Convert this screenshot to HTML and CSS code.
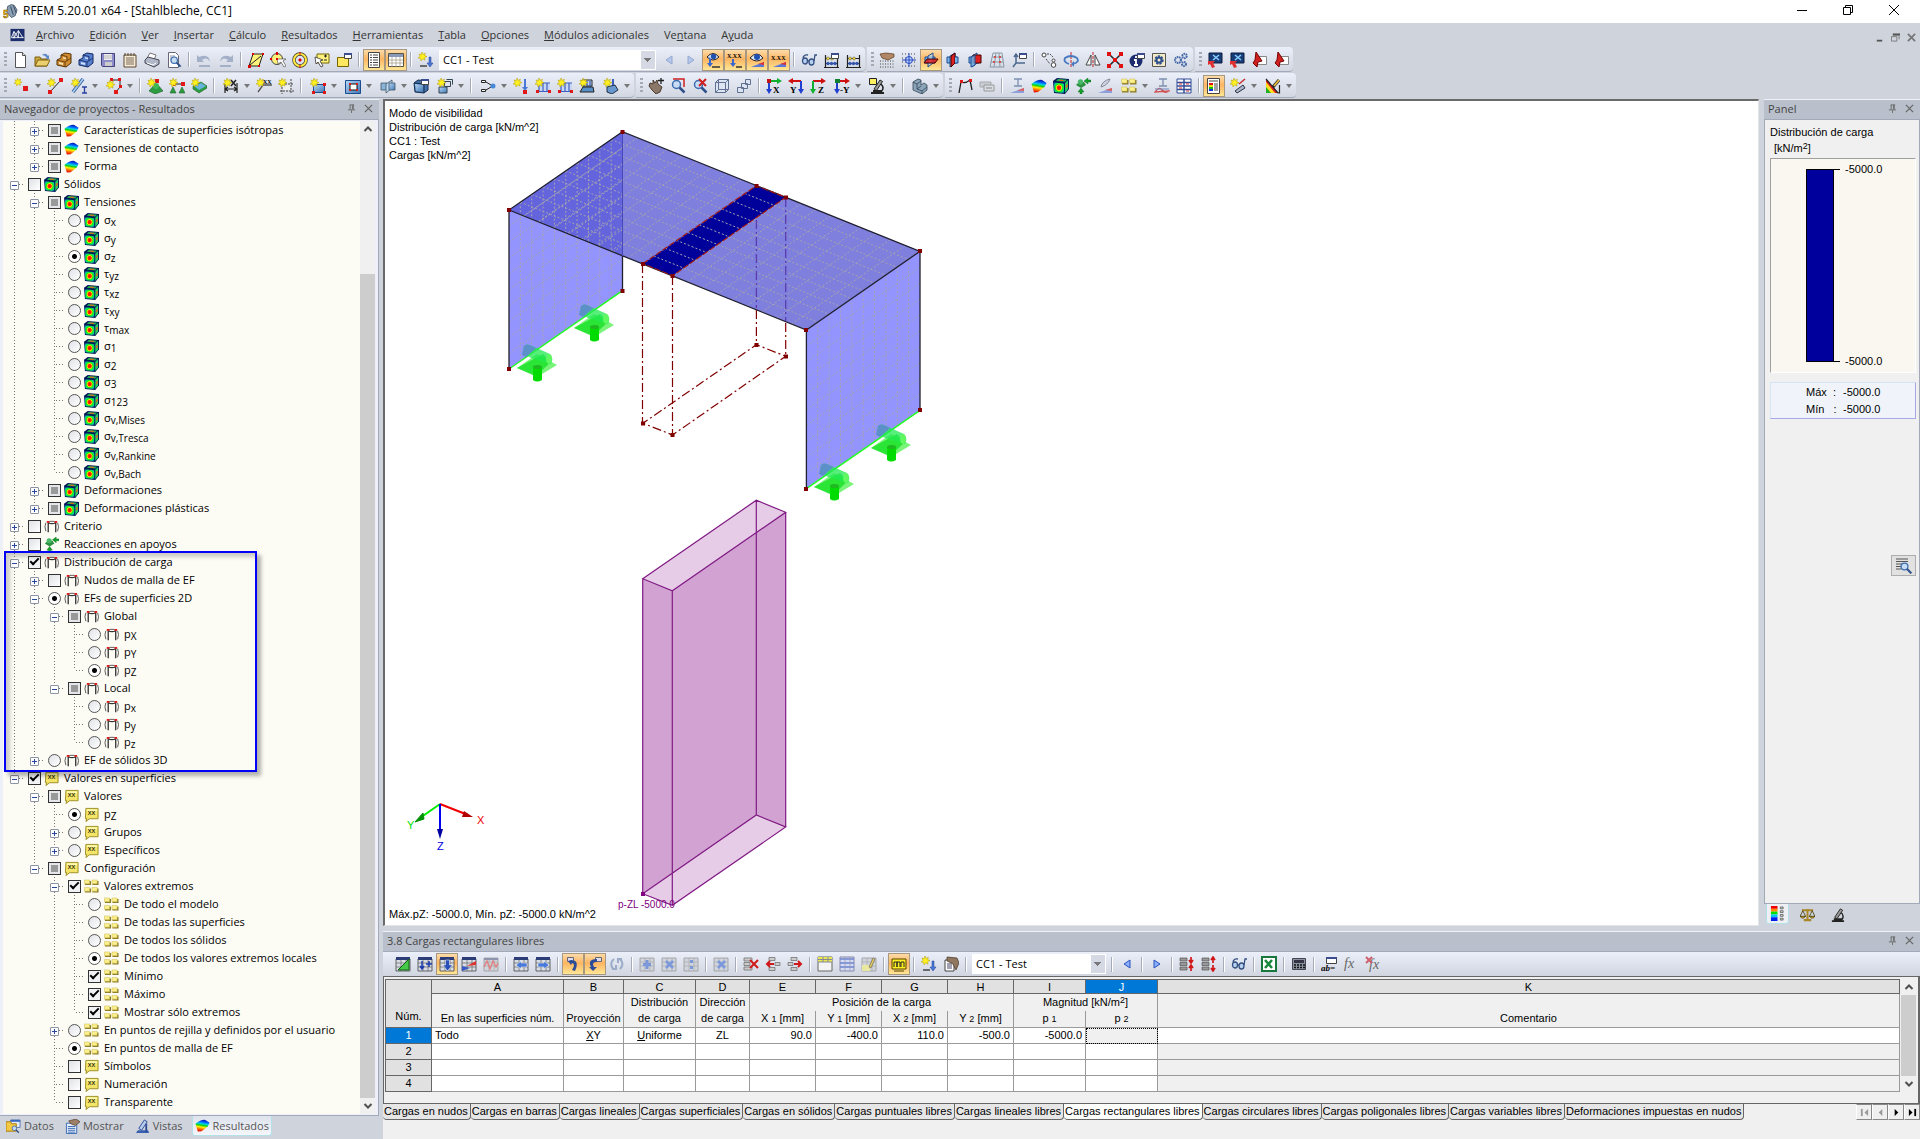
FILE: index.html
```html
<!DOCTYPE html>
<html lang="es">
<head>
<meta charset="utf-8">
<title>RFEM 5.20.01 x64 - [Stahlbleche, CC1]</title>
<link rel="stylesheet" href="styles.css">
</head>
<body>
<svg class="paints" aria-hidden="true">
<defs>
<linearGradient id="rb" x1=".6" y1="0" x2=".4" y2="1"><stop offset="0" stop-color="#0010a0"/><stop offset=".2" stop-color="#0060ff"/><stop offset=".35" stop-color="#00d8e0"/><stop offset=".48" stop-color="#10d010"/><stop offset=".63" stop-color="#fff000"/><stop offset=".8" stop-color="#ff7000"/><stop offset="1" stop-color="#e00000"/></linearGradient>
<radialGradient id="rr" r=".62"><stop offset="0" stop-color="#f00000"/><stop offset=".3" stop-color="#ff3000"/><stop offset=".42" stop-color="#ffe000"/><stop offset=".55" stop-color="#20f010"/><stop offset=".85" stop-color="#00d890"/><stop offset="1" stop-color="#0060a0"/></radialGradient>
<linearGradient id="bl" x1="0" y1="0" x2="1" y2="1"><stop offset="0" stop-color="#b8d8f4"/><stop offset="1" stop-color="#3f78b4"/></linearGradient>
</defs>
</svg>
<svg class="sprite" aria-hidden="true">
<defs>
<g id="star"><path d="M4 0l1 2.400L7.400 1.200 6.600 3.600 9 4.600 6.600 5.600 7 8.200 4.800 6.800 3 9 2.600 6.400 0 6 2.200 4.400 1 2 3.300 2.600z" fill="#fff020" stroke="#b09a00" stroke-width=".5"/></g>
<g id="arrd"><path d="M11 5h2v6h2l-3 4-3-4h2z" fill="#4a78d8" stroke="#1c3c90" stroke-width=".5"/></g>
<g id="win"><path d="M8.500 1.500h7v5h-7z" fill="#fff" stroke="#444"/><path d="M8 1h8v2H8z" fill="#3c4c90"/></g>
<g id="plane"><path d="M2 5h10v6H2z" fill="#7ab4e8" stroke="#1c4c90"/><path d="M5 4l5-3v10l-5 4z" fill="#b8d8f4" fill-opacity=".7" stroke="#1c4c90"/></g>
<g id="abac"><path d="M2.500 3v12M14.500 3v12M1 15.500h15" stroke="#222" stroke-width="1.200"/><path d="M2 6.500h12M2 11.500h12" stroke="#222"/><circle cx="5" cy="6.500" r="1.500" fill="#f0d840" stroke="#333" stroke-width=".4"/><circle cx="9" cy="6.500" r="1.500" fill="#f0d840" stroke="#333" stroke-width=".4"/><circle cx="5" cy="11.500" r="1.700" fill="#3458b0"/><circle cx="8.500" cy="11.500" r="1.700" fill="#3458b0"/><circle cx="12" cy="11.500" r="1.700" fill="#3458b0"/></g>
<g id="grid"><path d="M1 3h14v12H1z" fill="#d8dce4" stroke="#444" stroke-width=".8"/><path d="M1 7h14M1 11h14M6 3v12M11 3v12" stroke="#666" stroke-width=".7"/><path d="M1 1h14v3H1z" fill="#2c3c78"/></g>
<g id="ggrid"><path d="M1 2h14v13H1z" fill="#d0d4dc" stroke="#999" stroke-width=".8"/><path d="M1 6h14M1 10h14M6 2v13M11 2v13" stroke="#aaa" stroke-width=".7"/></g>
<g id="glass"><circle cx="6.500" cy="6.500" r="4" fill="#c8ddf4" stroke="#3c6cb0" stroke-width="1.500"/><path d="M9.500 9.500l5 5" stroke="#30508c" stroke-width="2.500"/></g>
<g id="micro"><path d="M2 15h13M4 13h9" stroke="#222" stroke-width="2"/><path d="M5 11l6-9 2.500 1.500-6 9z" fill="#999" stroke="#222"/><path d="M12 6q4 4 0 8" fill="none" stroke="#222" stroke-width="1.500"/></g>
</defs>
<symbol id="app" viewBox="0 0 16 16"><path d="M5 3l4-2 3 1 3 5-2 6-4 2-5-6z" fill="#8ca0b4" stroke="#34465c" stroke-width=".8"/><path d="M8 3l3 9M11 2l3 8" stroke="#34465c"/><text x="0" y="15" class="t-five">5</text></symbol>
<symbol id="mdi" viewBox="0 0 16 16"><path d="M0 1h16v14H0z" fill="#1c2f6c"/><path d="M1 11h14M4 12V4l-3 7M4 4l5 7V3L4 11M9 3l5 8" stroke="#fff" fill="none"/></symbol>
<symbol id="new" viewBox="0 0 16 16"><path d="M3.500.5h7l3 3v12h-10z" fill="#fff" stroke="#555"/><path d="M10.500.5v3h3" fill="#ddd" stroke="#555"/></symbol>
<symbol id="open" viewBox="0 0 16 16"><path d="M1 14V5h5l1 2h6v7z" fill="#caa63c" stroke="#7c6010"/><path d="M1 14l3-6h12l-3 6z" fill="#ecd070" stroke="#7c6010"/><path d="M8 3q4-3 6 1l1-1v4h-3l1-1q-2-3-5-3z" fill="#5c88c8"/></symbol>
<symbol id="cabo" viewBox="0 0 16 16"><path d="M1 8l4-2V3l4-2 6 1v9l-5 4-9-2z" fill="#d08c30" stroke="#553408"/><path d="M1 8l8 2 6-4M9 10v5M5 3l6 1.500V9" fill="none" stroke="#553408" stroke-width=".8"/><path d="M3 10l4 1v2l-4-1zM7 5l3 .7v1.500L7 6.500z" fill="#f8e0b0"/></symbol>
<symbol id="cabb" viewBox="0 0 16 16"><path d="M1 8l4-2V3l4-2 6 1v9l-5 4-9-2z" fill="#5880d0" stroke="#142860"/><path d="M1 8l8 2 6-4M9 10v5M5 3l6 1.500V9" fill="none" stroke="#142860" stroke-width=".8"/><path d="M3 10l4 1v2l-4-1zM7 5l3 .7v1.500L7 6.500z" fill="#d0e0fc"/></symbol>
<symbol id="save" viewBox="0 0 16 16"><path d="M1.500 1.500h13v13h-12l-1-1z" fill="#8c8cc8" stroke="#44447c"/><path d="M4 2h8v6H4z" fill="#eee"/><path d="M5 10h7v4H5z" fill="#ccc"/><path d="M4 4h8M4 6h8" stroke="#999" stroke-width=".6"/></symbol>
<symbol id="note" viewBox="0 0 16 16"><path d="M2 3h12v12H2z" fill="#f4ecd8" stroke="#5c4830"/><path d="M4 6h8M4 8h8M4 10h8M4 12h8" stroke="#7c6850"/><path d="M3 1v3M6 1v3M9 1v3M12 1v3" stroke="#5c4830"/></symbol>
<symbol id="print" viewBox="0 0 16 16"><path d="M3 6L6 1l6 2-2 5z" fill="#fff" stroke="#777"/><path d="M1 8l3-3 11 3v4l-5 3-9-4z" fill="#b0b8c8" stroke="#445"/><path d="M3 11l6 2 3-2" stroke="#fff" fill="none"/></symbol>
<symbol id="preview" viewBox="0 0 16 16"><path d="M2.500.5h7l3 3v12h-10z" fill="#fff" stroke="#667"/><path d="M4 4h5M4 6h6M4 8h4" stroke="#89a"/><g transform="translate(3 3) scale(.8)"><use href="#glass"/></g></symbol>
<symbol id="undo" viewBox="0 0 16 16"><path d="M1 3v7h7L6 8q5-4 8 2-1-9-11-5z" fill="#a4b0c8"/><path d="M3 14h11" stroke="#a4b0c8" stroke-width="2"/></symbol>
<symbol id="redo" viewBox="0 0 16 16"><path d="M15 3v7H8l2-2Q5 4 2 10q1-9 11-5z" fill="#a4b0c8"/><path d="M2 14h11" stroke="#a4b0c8" stroke-width="2"/></symbol>
<symbol id="spar" viewBox="0 0 16 16"><path d="M1 14L5 2h10l-4 12z" fill="#fff27c" stroke="#222"/><path d="M2 13L13 4" stroke="#222"/><path d="M0 13h3v3H0zM4 1h2v2H4zM14 1h2v2h-2zM10 13h2v2h-2z" fill="#d00"/></symbol>
<symbol id="scir" viewBox="0 0 16 16"><circle cx="7" cy="7" r="5.500" fill="#fff27c" stroke="#444"/><path d="M7 7h9l-3 2 3 5-2 1-3-5-3 2z" fill="#fff" stroke="#555" stroke-width=".7"/><path d="M6 0h2v3H6zM0 6h2v2H0zM6 6h2v2H6z" fill="#d00"/></symbol>
<symbol id="targ" viewBox="0 0 16 16"><circle cx="8" cy="8" r="6" fill="none" stroke="#333" stroke-width="3.500"/><circle cx="8" cy="8" r="6" fill="none" stroke="#ffe840" stroke-width="2.200"/><path d="M7 7h2v2H7zM8 0v3M8 13v3" fill="#d00" stroke="#d00"/></symbol>
<symbol id="scur" viewBox="0 0 16 16"><path d="M3 2h12v9H3z" fill="#fff27c" stroke="#776600"/><path d="M1 5l8 3-3 1 3 5-2 1-3-5-2 2z" fill="#fff" stroke="#333" stroke-width=".8"/><path d="M10 4h3M11.500 2.500v3M10 8h3" stroke="#222"/></symbol>
<symbol id="swin" viewBox="0 0 16 16"><path d="M1.500 5.500h11v9h-11z" fill="#ffe860" stroke="#776600"/><use href="#win"/></symbol>
<symbol id="list" viewBox="0 0 16 16"><path d="M2.500.5h11v15h-11z" fill="#fff" stroke="#444"/><path d="M4 3h2M4 5.500h2M4 8h2M4 10.500h2M4 13h2M7 3h5M7 5.500h5M7 8h5M7 10.500h5M7 13h5" stroke="#444"/></symbol>
<symbol id="table" viewBox="0 0 16 16"><path d="M.5 1.500h15v13H.5z" fill="#fff" stroke="#554"/><path d="M1 2h14v3H1z" fill="#8c98b8"/><path d="M1 8h14M1 11h14M4 5v10M8 5v10M12 5v10" stroke="#a8a090" stroke-width=".8"/></symbol>
<symbol id="load" viewBox="0 0 16 16"><use href="#star"/><use href="#arrd"/><path d="M2 14h7" stroke="#444" stroke-width="1.500"/></symbol>
<symbol id="prevl" viewBox="0 0 16 16"><path d="M11 4v8L5 8z" fill="#b4c8ec" stroke="#94a8d0"/></symbol>
<symbol id="nextl" viewBox="0 0 16 16"><path d="M5 4v8l6-4z" fill="#b4c8ec" stroke="#94a8d0"/></symbol>
<symbol id="prev" viewBox="0 0 16 16"><path d="M11 4v8L5 8z" fill="#88b0f8" stroke="#2850c0"/></symbol>
<symbol id="next" viewBox="0 0 16 16"><path d="M5 4v8l6-4z" fill="#88b0f8" stroke="#2850c0"/></symbol>
<symbol id="eyea" viewBox="0 0 16 16"><path d="M2 5q6-7 12 0-6 6-12 0z" fill="#dce8f8" stroke="#222"/><circle cx="8.500" cy="4.500" r="2.700" fill="#2050b0"/><path d="M4 5v6H2l3 4 3-4H6V7z" fill="#3868d0"/><path d="M7 15h8" stroke="#333" stroke-width="1.500"/></symbol>
<symbol id="xxa" viewBox="0 0 16 16"><text x="0" y="6" class="t-xx">X.XX</text><path d="M5 7v4H3l3 4 3-4H7V7z" fill="#3868d0"/><path d="M9 15h6" stroke="#333" stroke-width="1.500"/></symbol>
<symbol id="eyet" viewBox="0 0 16 16"><path d="M1 6q7-8 13 0-6 6-13 0z" fill="#dce8f8" stroke="#222"/><circle cx="8" cy="5" r="3" fill="#2050b0"/><path d="M2 15h13v-5z" fill="#5a78d8"/><path d="M9 12l6-2v3z" fill="#e03030"/></symbol>
<symbol id="xxt" viewBox="0 0 16 16"><text x="0" y="8" class="t-xx">X.XX</text><path d="M2 15h13v-5z" fill="#5a78d8"/><path d="M9 12l6-2v3z" fill="#e03030"/></symbol>
<symbol id="specs" viewBox="0 0 16 16"><ellipse cx="4" cy="9" rx="2.500" ry="3" fill="#b8d0f0" stroke="#345080" stroke-width="1.300"/><ellipse cx="10.500" cy="10" rx="2.500" ry="3" fill="#b8d0f0" stroke="#345080" stroke-width="1.300"/><path d="M2 6q1-4 5-3M13 9l1-6h2M7 9h1" fill="none" stroke="#345080" stroke-width="1.300"/></symbol>
<symbol id="abw" viewBox="0 0 16 16"><use href="#abac"/><use href="#win"/></symbol>
<symbol id="ab" viewBox="0 0 16 16"><use href="#abac"/></symbol>
<symbol id="hgrid" viewBox="0 0 16 16"><path d="M1 9h14M1 12h14M1 15h14" stroke="#444" stroke-dasharray="1 1.500"/><path d="M1 2l6-1 8 1v3L9 8 3 6z" fill="#b08868" stroke="#5c3818" stroke-width=".7"/></symbol>
<symbol id="gsnap" viewBox="0 0 16 16"><path d="M1 2h14M1 6h14M1 10h14M1 14h14" stroke="#444" stroke-dasharray="1 2"/><circle cx="8" cy="8" r="3.500" fill="#bcd4fc" stroke="#2848c0"/><path d="M8 1v14M1 8h14" stroke="#2848c0"/></symbol>
<symbol id="wp1" viewBox="0 0 16 16"><use href="#plane"/><path d="M1 11l3-4h11l-3 4z" fill="#e02020" fill-opacity=".85" stroke="#400"/></symbol>
<symbol id="wp2" viewBox="0 0 16 16"><use href="#plane"/><path d="M6 4l4-3v10l-4 4z" fill="#e02020" stroke="#400"/><path d="M10 5h3v6h-3" fill="#7ab4e8" stroke="#1c4c90"/></symbol>
<symbol id="wp3" viewBox="0 0 16 16"><use href="#plane"/><path d="M6 3h8v8H6z" fill="#e02020" stroke="#400"/><path d="M4 5l4-2v10l-4 2z" fill="#7ab4e8" fill-opacity=".8" stroke="#1c4c90"/></symbol>
<symbol id="gdot" viewBox="0 0 16 16"><path d="M4 1h9l2 14H1zM3 5h11M2 10h12M7 1L5 15M10 1l1 14" fill="none" stroke="#8898a8"/><path d="M5 4h2v2H5zM10 4h2v2h-2zM4 9h2v2H4zM10 9h2v2h-2z" fill="#d05050"/></symbol>
<symbol id="axw" viewBox="0 0 16 16"><path d="M5 2v9l-3 4M5 11h9M3 5l2-3 2 3" fill="none" stroke="#4c6890" stroke-width="1.500"/><use href="#win"/></symbol>
<symbol id="copy" viewBox="0 0 16 16"><circle cx="3" cy="3" r="2" fill="#fff" stroke="#444"/><circle cx="12.500" cy="13" r="2.300" fill="#fff" stroke="#444"/><circle cx="12.500" cy="8.500" r="1.500" fill="#fff" stroke="#444"/><path d="M5 7l4 5M6 2h3l3 3" fill="none" stroke="#444" stroke-dasharray="2 1"/></symbol>
<symbol id="rot" viewBox="0 0 16 16"><path d="M8 0v16" stroke="#c02020" stroke-dasharray="3 1"/><path d="M6 12q-6-2-4-6 6-4 12 0 3 4-4 6" fill="none" stroke="#4878c0" stroke-width="1.800"/><path d="M11 9v6l-3-3z" fill="#4878c0"/></symbol>
<symbol id="mir" viewBox="0 0 16 16"><path d="M8 0v16" stroke="#c02020" stroke-dasharray="3 1"/><path d="M6 3v10H1zM10 3v10h5z" fill="#fff" stroke="#444"/></symbol>
<symbol id="xnode" viewBox="0 0 16 16"><path d="M2 2l12 12M14 2L2 14" stroke="#222" stroke-width="1.500"/><path d="M0 0h4v4H0zM12 0h4v4h-4zM0 12h4v4H0zM12 12h4v4h-4zM6 6h4v4H6z" fill="#e01010"/></symbol>
<symbol id="info" viewBox="0 0 16 16"><circle cx="7" cy="9" r="6.500" fill="#1c2c6c"/><path d="M7 4v2M5 8h2v5M5 13h4" stroke="#fff" stroke-width="1.800" fill="none"/><use href="#win"/></symbol>
<symbol id="gdoc" viewBox="0 0 16 16"><path d="M1.500 1.500h13v13h-13z" fill="#f4ecc8" stroke="#555"/><circle cx="8" cy="8" r="3.500" fill="none" stroke="#30508c" stroke-width="2.500" stroke-dasharray="2 1"/><circle cx="8" cy="8" r="2.500" fill="none" stroke="#30508c" stroke-width="2"/></symbol>
<symbol id="gears" viewBox="0 0 16 16"><g fill="none" stroke="#4468a8" stroke-width="2"><circle cx="5" cy="8" r="3" stroke-dasharray="1.500 .6"/><circle cx="11.500" cy="4" r="2.200" stroke-dasharray="1.500 .6"/><circle cx="11" cy="12" r="2" stroke-dasharray="1.500 .6"/></g></symbol>
<symbol id="scr" viewBox="0 0 16 16"><path d="M2 1h13v10H2z" fill="#183c78" stroke="#0c1c40"/><path d="M6 3l6 5M12 3L6 8" stroke="#8cd0ff" stroke-width="1.500"/><path d="M1 9h7l-2 2 2 4-3 1-2-4-2 1z" fill="#e03030"/></symbol>
<symbol id="pdf" viewBox="0 0 16 16"><path d="M6.500 4.500h9v8h-9z" fill="#fff" stroke="#888"/><path d="M5 0l6 9-4 1-1 5-4-4 2-3z" fill="#d02020" stroke="#700"/></symbol>
<symbol id="node" viewBox="0 0 16 16"><g transform="scale(.9)"><use href="#star"/></g><path d="M9 8h5v5H9z" fill="#e01818"/></symbol>
<symbol id="line" viewBox="0 0 16 16"><path d="M3 14L14 2" stroke="#222"/><path d="M1 12h4v4H1zM12 0h4v4h-4z" fill="#e01818"/><use href="#star"/></symbol>
<symbol id="memb" viewBox="0 0 16 16"><path d="M2 14L12 1" stroke="#2c5c9c" stroke-width="3.500"/><path d="M2 14L12 1" stroke="#a8c8ec" stroke-width="2"/><use href="#star"/><path d="M11 9h5M11 15h5M13.500 9v6" stroke="#2840a0" stroke-width="1.300"/></symbol>
<symbol id="poly" viewBox="0 0 16 16"><path d="M5 2h9v7l-4 5" fill="none" stroke="#222"/><path d="M4 0h3v3H4zM12 0h3v3h-3zM13 7h3v3h-3zM8 12h4v4H8z" fill="#e01818"/><g transform="translate(0 2)"><use href="#star"/></g></symbol>
<symbol id="supp" viewBox="0 0 16 16"><path d="M8 6l3 1 5 6-8 3-6-3z" fill="#2c9c40" stroke="#0c5018" stroke-width=".5"/><circle cx="9" cy="8" r="3" fill="#40b858"/><path d="M8 1h4v4H8z" fill="#e01818"/><use href="#star"/></symbol>
<symbol id="supl" viewBox="0 0 16 16"><path d="M5 6h8" stroke="#222"/><path d="M3 4h4v4H3zM12 4h4v4h-4z" fill="#e01818"/><path d="M4 9l3 6H1zM13 9l3 6h-6z" fill="#2c9c40" stroke="#0c5018" stroke-width=".5"/><use href="#star"/></symbol>
<symbol id="supf" viewBox="0 0 16 16"><path d="M2 8l8-4 6 4v2l-8 5-6-4z" fill="#2c9c40" stroke="#0c5018" stroke-width=".5"/><path d="M3 8l7-3 5 3-7 4z" fill="#68b4e0"/><use href="#star"/></symbol>
<symbol id="dim" viewBox="0 0 16 16"><path d="M2 5v10M14 5v10M2 11h12M5 9l-3 2 3 2M11 9l3 2-3 2" fill="none" stroke="#222" stroke-width="1.200"/><use href="#star"/><path d="M8 2l5 6M13 2L8 8" stroke="#222" stroke-width="1.500"/></symbol>
<symbol id="dxx" viewBox="0 0 16 16"><path d="M2 14l5-7h9" fill="none" stroke="#555" stroke-width="1.300"/><use href="#star"/><text x="7" y="6" class="t-xx">XX</text></symbol>
<symbol id="sect" viewBox="0 0 16 16"><path d="M4 3v13M13 1v14M1 6h15M2 13h14" stroke="#444" stroke-dasharray="2 1"/><path d="M5 7h7v5H5z" fill="#eee"/><use href="#star"/></symbol>
<symbol id="surf" viewBox="0 0 16 16"><path d="M3.500 6.500h11v8h-11z" fill="url(#bl)" stroke="#1c4c90"/><path d="M2 13h3v3H2zM13 13h3v3h-3zM13 5h3v3h-3z" fill="#e01818"/><use href="#star"/></symbol>
<symbol id="opng" viewBox="0 0 16 16"><path d="M.5 2.500h15v13H.5z" fill="url(#bl)" stroke="#1c4c90"/><path d="M5 6h7v6H5z" fill="#fff" stroke="#111"/><path d="M4 5h2v2H4zM11 5h2v2h-2zM4 11h2v2H4zM11 11h2v2h-2z" fill="#e01818"/></symbol>
<symbol id="fold" viewBox="0 0 16 16"><path d="M1 5h6v7H1z" fill="#8ab4d8" stroke="#456" stroke-width=".8"/><path d="M6 6l6-4v8l-6 5z" fill="#b8d8f4" stroke="#456" stroke-width=".8"/><path d="M9 5h6v7l-6 0z" fill="url(#bl)" stroke="#456" stroke-width=".8"/></symbol>
<symbol id="sold" viewBox="0 0 16 16"><path d="M1 5l4-3 10 1v9l-4 3-9-1z" fill="#4470a8" stroke="#142c50"/><path d="M1 5l10 1v9M11 6l4-3" fill="none" stroke="#142c50"/><path d="M2 6l8 1v7l-7-1z" fill="url(#bl)"/><use href="#win"/></symbol>
<symbol id="boxs" viewBox="0 0 16 16"><path d="M2 9h8v6H2z" fill="url(#bl)" stroke="#345"/><path d="M7.500 3.500h6v5h-6zM9.500 1.500h6v5" fill="none" stroke="#345"/><use href="#star"/></symbol>
<symbol id="dist" viewBox="0 0 16 16"><path d="M1.500 2.500h4v2h-4zM1.500 11.500h4v2h-4z" fill="#fff" stroke="#222"/><path d="M6 4l5 3M6 12l5-3" fill="none" stroke="#222"/><circle cx="13" cy="8" r="2.500" fill="#4888d8"/></symbol>
<symbol id="nload" viewBox="0 0 16 16"><use href="#star"/><path d="M11 1h2v8h2l-3 4-3-4h2z" fill="#4a78d8"/><path d="M10 12h4v4h-4z" fill="#e01818"/></symbol>
<symbol id="mload" viewBox="0 0 16 16"><path d="M3 5h12v8H3z" fill="#c8d8f4"/><path d="M4 5v8M8 5v8M12 5v8M3 5h12M2 13.500h13" stroke="#3c60c0" stroke-width="1.200"/><path d="M1 12h3v3H1zM13 12h3v3h-3z" fill="#e01818"/><use href="#star"/></symbol>
<symbol id="fload" viewBox="0 0 16 16"><path d="M3 2h10v6H3z" fill="#c8d8f4" stroke="#222"/><path d="M5 3v8M8 3v8M11 3v8" stroke="#3c60c0" stroke-width="1.300"/><path d="M1 14l3-5h10l1 5z" fill="#5890c8" stroke="#222"/><use href="#star"/></symbol>
<symbol id="sload" viewBox="0 0 16 16"><path d="M9 1h2v7H9z" fill="#3c60c0"/><path d="M4 9l8-2 3 5-6 4-5-2z" fill="#6898d0" stroke="#234"/><use href="#star"/></symbol>
<symbol id="pan" viewBox="0 0 16 16"><path d="M2 5l3 1 0-4 2 3 2-3 1 4 4 3-2 5-4 2-4-4-3-4z" fill="#8c7868" stroke="#332418" stroke-width=".8"/><path d="M10 2.500h6M13 0v6" stroke="#222" stroke-width="1.300"/></symbol>
<symbol id="zoomw" viewBox="0 0 16 16"><path d="M3 1h11v8" fill="none" stroke="#d02020" stroke-width="1.500"/><use href="#glass"/></symbol>
<symbol id="zoomx" viewBox="0 0 16 16"><use href="#glass"/><path d="M7 1l7 7M14 1L7 8" stroke="#d02020" stroke-width="2"/></symbol>
<symbol id="wire" viewBox="0 0 16 16"><path d="M1.500 4.500l3-3h10v10l-3 3h-10zM1.500 4.500h10v10M11.500 4.500l3-3M4.500 1.500v10h10M4.500 11.500l-3 3" fill="#dce4f4" stroke="#607090"/></symbol>
<symbol id="exps" viewBox="0 0 16 16"><path d="M1.500 9.500h6v5h-6zM5.500 5.500h6v5h-6zM9.500 1.500h5v5h-5z" fill="#dce4f4" stroke="#607090"/></symbol>
<symbol id="vx" viewBox="0 0 16 16"><path d="M3 3h9" stroke="#10b030" stroke-width="2"/><path d="M11 0l5 3-5 3z" fill="#10b030"/><path d="M3 3v9" stroke="#2040d0" stroke-width="2"/><path d="M0 11h6l-3 5z" fill="#2040d0"/><path d="M1 1h4v4H1z" fill="#c01010"/><text x="7" y="15" class="t-ax">X</text></symbol>
<symbol id="vy" viewBox="0 0 16 16"><path d="M4 3h9" stroke="#d01010" stroke-width="2"/><path d="M5 0L0 3l5 3z" fill="#d01010"/><path d="M13 3v9" stroke="#2040d0" stroke-width="2"/><path d="M10 11h6l-3 5z" fill="#2040d0"/><text x="2" y="15" class="t-ax">Y</text></symbol>
<symbol id="vz" viewBox="0 0 16 16"><path d="M3 3h9" stroke="#d01010" stroke-width="2"/><path d="M11 0l5 3-5 3z" fill="#d01010"/><path d="M3 3v9" stroke="#10b030" stroke-width="2"/><path d="M0 11h6l-3 5z" fill="#10b030"/><text x="8" y="15" class="t-ax">Z</text></symbol>
<symbol id="vmy" viewBox="0 0 16 16"><path d="M3 3h9" stroke="#d01010" stroke-width="2"/><path d="M11 0l5 3-5 3z" fill="#d01010"/><path d="M3 3v9" stroke="#2040d0" stroke-width="2"/><path d="M0 11h6l-3 5z" fill="#2040d0"/><path d="M1 1h5v4H1z" fill="#108030"/><text x="6" y="15" class="t-ax">-Y</text></symbol>
<symbol id="vis" viewBox="0 0 16 16"><use href="#micro"/><path d="M.5.5h7v6h-7z" fill="#fff060" stroke="#222"/></symbol>
<symbol id="lblk" viewBox="0 0 16 16"><path d="M1 4l5-3 3 1v5l3-2 3 2v5l-5 4-9-4z" fill="#8ca4b8" stroke="#345" stroke-width=".8"/><path d="M1 4l4 2v5l5 2v3M5 6l4-3M10 13l5-4M5 11l4-3" fill="none" stroke="#345" stroke-width=".8"/></symbol>
<symbol id="frm" viewBox="0 0 16 16"><path d="M2 15L4 4q4 2 9-2l2 10" fill="none" stroke="#222" stroke-width="1.300"/><path d="M3 2h3v3H3zM12 1h3v3h-3z" fill="#e01818"/></symbol>
<symbol id="gray" viewBox="0 0 16 16"><path d="M1 4h11v5H1z" fill="#c8ccd4" stroke="#aaa"/><path d="M5 7h10v6H5z" fill="#d8dce4" stroke="#999"/><path d="M7 10h6" stroke="#888"/></symbol>
<symbol id="itri" viewBox="0 0 16 16"><path d="M5 1h8M5 8h8M9 1v7" stroke="#7c90b0" stroke-width="1.300"/><path d="M1 15h14v-5z" fill="#8ca0dc"/><path d="M8 12.500l7-2.500v3z" fill="#e06060"/></symbol>
<symbol id="fan" viewBox="0 0 16 16"><path d="M.5 6Q7 1 11 2l4.500 3-2 4L7 14l-4 .5z" fill="url(#rb)"/></symbol>
<symbol id="cube" viewBox="0 0 16 16"><path d="M0 3l4-3 12 1v10l-4 5-11-1z" fill="#001858"/><path d="M1 4.500l10 1V15L1.500 14z" fill="url(#rr)"/><path d="M12 5l3-3v9l-3 4z" fill="#20d060"/><path d="M3 3l2-2 9 .8-2 2z" fill="#20b850"/><path d="M13 7l1.500-1v3L13 10.500zM7 1.700l4 .5-1 .9-4-.4z" fill="#f06010"/></symbol>
<symbol id="react" viewBox="0 0 16 16"><path d="M1 7l3-3 5 0 2 3-5 3z" fill="#2c9040"/><circle cx="5.500" cy="4" r="2.700" fill="#48b868"/><path d="M16 2h-3V0l-4 3 4 3V4h3zM7 16v-2h2l-3-4-3 4h2v2z" fill="#10a028" stroke="#0c6018" stroke-width=".4"/></symbol>
<symbol id="rtri" viewBox="0 0 16 16"><path d="M1 15h14v-5z" fill="#8ca0dc"/><path d="M8 12l7-2v3z" fill="#e06060"/><path d="M4 9q1-6 9-8-2 6-9 8z" fill="#ccd4e4" stroke="#889"/></symbol>
<symbol id="four" viewBox="0 0 16 16"><g fill="#8c7c28"><path d="M1 2h6.500v4.500H1zM9 2h6.500v4.500H9zM1 10h6.500v4.500H1zM9 10h6.500v4.500H9z"/></g><g fill="#fbf08c" stroke="#c8b850" stroke-width=".5"><path d="M.5 1H6v4H.5zM8.500 1H14v4H8.500zM.5 9H6v4H.5zM8.500 9H14v4H8.500z"/></g></symbol>
<symbol id="icur" viewBox="0 0 16 16"><path d="M5 1h8M5 8h8M9 1v7" stroke="#7c90b0" stroke-width="1.300"/><path d="M1 14q4-6 7-2t7 1z" fill="none" stroke="#d05050" stroke-width="1.300"/><path d="M1 11h14" stroke="#7088c0"/></symbol>
<symbol id="resg" viewBox="0 0 16 16"><path d="M1 1h14v14H1z" fill="#fff" stroke="#334c98"/><path d="M1 4.500h14M1 8h14M1 11.500h14M8 1v14" stroke="#334c98" stroke-width="1.500"/><path d="M3 6h3M10 6h3M3 10h3M10 13h3" stroke="#d03030"/></symbol>
<symbol id="pnl" viewBox="0 0 16 16"><path d="M1.500.5h12v15h-12z" fill="#fff" stroke="#444"/><path d="M3 3h9" stroke="#444"/><path d="M3 5h4v2H3z" fill="#e01010"/><path d="M3 7h4v2H3z" fill="#f0e010"/><path d="M3 9h4v2H3z" fill="#10c010"/><path d="M3 11h4v2H3z" fill="#1030e0"/><path d="M8 6h4M8 8h4M8 10h4M8 12h4" stroke="#444"/></symbol>
<symbol id="wand" viewBox="0 0 16 16"><path d="M5 13l8-6 2 3-8 5z" fill="#a8b4c8" stroke="#334"/><path d="M9 6l6-5" stroke="#c83030" stroke-width="1.500"/><use href="#star"/></symbol>
<symbol id="flag" viewBox="0 0 16 16"><path d="M1 1v14h12z" fill="#e02020"/><path d="M1 4v11h9z" fill="#ffe020"/><path d="M1 9v6h5z" fill="#20b020"/><path d="M1 1l12 14M14.500 7v8H13" fill="none" stroke="#222" stroke-width="1.200"/><path d="M14 2L8 9" stroke="#222" stroke-width="3"/><path d="M14 2L9 8" stroke="#f0c040" stroke-width="1.800"/></symbol>
<symbol id="arch" viewBox="0 0 16 16"><path d="M4.500 14V4q4 2 8 0V14" fill="none" stroke="#333" stroke-width="1.400"/><path d="M3 3h3M11 3h3" stroke="#e01818" stroke-width="2"/><path d="M6 2.500h5" stroke="#555"/><path d="M2 4Q0 8 2 13M14.500 4q2 4 0 9" fill="none" stroke="#555"/></symbol>
<symbol id="xx" viewBox="0 0 16 16"><path d="M2 1.500h13v11H6l-4 3 1-3H1.500z" fill="#f4e468" stroke="#9c8c20"/><path d="M3 2.500h11v2H3z" fill="#fffab0"/><text x="4" y="9" class="t-note">xx</text></symbol>
<symbol id="t1" viewBox="0 0 16 16"><use href="#grid"/><path d="M3 14h11V3z" fill="#48c848" stroke="#106010"/></symbol>
<symbol id="t2" viewBox="0 0 16 16"><use href="#grid"/><path d="M5 5v8M3 10l2 3 2-3M9 8h6M12 5v6" fill="none" stroke="#1c3cb0" stroke-width="1.500"/></symbol>
<symbol id="t3" viewBox="0 0 16 16"><use href="#grid"/><path d="M6.500 4h4v5h3L8.500 15 4 9h2.500z" fill="#2850b8" stroke="#fff" stroke-width=".5"/></symbol>
<symbol id="t4" viewBox="0 0 16 16"><use href="#grid"/><path d="M6 10l9-5v4z" fill="#e03030"/><path d="M1 10l8 2-8 3z" fill="#3858c8"/></symbol>
<symbol id="t5" viewBox="0 0 16 16"><use href="#ggrid"/><path d="M1 2h14v2H1z" fill="#8c94b0"/><path d="M1 11l3-6 3 8 3-8 3 6 2-4" fill="none" stroke="#e08080" stroke-width="1.400"/></symbol>
<symbol id="tl" viewBox="0 0 16 16"><use href="#grid"/><path d="M3 9l5-4v2h6v4H8v2z" fill="#4878d8" stroke="#fff" stroke-width=".5"/></symbol>
<symbol id="tr" viewBox="0 0 16 16"><use href="#grid"/><path d="M14 9L9 5v2H3v4h6v2z" fill="#4878d8" stroke="#fff" stroke-width=".5"/></symbol>
<symbol id="c1" viewBox="0 0 16 16"><path d="M2.500 1.500h6v4h-6z" fill="#dde" stroke="#667"/><path d="M6 4q9 0 4 11l-3-1q4-6 0-7l-1 2-3-4z" fill="#2c4c98"/></symbol>
<symbol id="c2" viewBox="0 0 16 16"><path d="M8.500 1.500h6v4h-6z" fill="#dde" stroke="#667"/><path d="M10 3Q0 3 4 11H2l4 4 4-4H7q-3-5 3-5z" fill="#2c4c98"/></symbol>
<symbol id="c3" viewBox="0 0 16 16"><path d="M4 13Q0 7 5 3M11 3q5 5 0 10M3 13h4V9M13 3H9v4" fill="none" stroke="#9cacc8" stroke-width="2"/></symbol>
<symbol id="gp" viewBox="0 0 16 16"><use href="#ggrid"/><path d="M8 4v9M4 8.500h8" stroke="#7c98dc" stroke-width="3"/></symbol>
<symbol id="gx" viewBox="0 0 16 16"><use href="#ggrid"/><path d="M5 5l7 7M12 5l-7 7" stroke="#7c98dc" stroke-width="2.500"/></symbol>
<symbol id="gd" viewBox="0 0 16 16"><use href="#ggrid"/><path d="M7 4h3v3H7zM7 10h3v3H7z" fill="#7c98dc"/></symbol>
<symbol id="rx" viewBox="0 0 16 16"><path d="M1 2h8v3H1zM1 6.500h6v3H1zM1 11h8v3H1z" fill="#ccc" stroke="#666" stroke-width=".7"/><path d="M7 4l8 8M15 4l-8 8" stroke="#d01818" stroke-width="2"/></symbol>
<symbol id="rl" viewBox="0 0 16 16"><path d="M4 1.500h6v3H4zM10 6.500h5v3h-5zM4 11.500h6v3H4z" fill="#ccc" stroke="#666" stroke-width=".7"/><path d="M9 8H2M5 5L2 8l3 3" fill="none" stroke="#d01818" stroke-width="2"/></symbol>
<symbol id="rg" viewBox="0 0 16 16"><path d="M4 1.500h6v3H4zM1 6.500h5v3H1zM4 11.500h6v3H4z" fill="#ccc" stroke="#666" stroke-width=".7"/><path d="M7 8h7M11 5l3 3-3 3" fill="none" stroke="#d01818" stroke-width="2"/></symbol>
<symbol id="y1" viewBox="0 0 16 16"><path d="M1 1h14v14H1z" fill="#f4f4f4" stroke="#666"/><path d="M1 1h14v5H1z" fill="#e8e850"/><path d="M1 3.500h14M1 6h14M6 1v5M11 1v5" stroke="#889"/></symbol>
<symbol id="y2" viewBox="0 0 16 16"><path d="M1 1h14v14H1z" fill="#d4dcf4" stroke="#88a"/><path d="M1 3h14M1 7h14M1 11h14" stroke="#6c84d0" stroke-width="1.500"/><path d="M6 1v14M11 1v14" stroke="#99a" stroke-width=".7"/></symbol>
<symbol id="y3" viewBox="0 0 16 16"><use href="#ggrid"/><path d="M1 9h8v6H1z" fill="#e8e8a0"/><path d="M8 11l4-9 2 1-4 9z" fill="#e8c850" stroke="#887"/></symbol>
<symbol id="keyb" viewBox="0 0 16 16"><path d="M1 3h14v10H1z" fill="#fff020" stroke="#554400"/><path d="M3 11V6h3v5M6 11V6h3v5M10 11V6h3v5" fill="none" stroke="#222"/><path d="M3 15h10" stroke="#554400"/></symbol>
<symbol id="hand" viewBox="0 0 16 16"><path d="M2 4h9v11H2z" fill="#fff" stroke="#444"/><path d="M4 8h5M4 10h5M4 12h5" stroke="#446"/><path d="M4 1l10 1 2 5-3 7-3-6-6-3z" fill="#907860" stroke="#432" stroke-width=".7"/></symbol>
<symbol id="u1" viewBox="0 0 16 16"><path d="M1 2h7v3H1zM1 6.500h7v3H1zM1 11h7v3H1z" fill="#999" stroke="#555" stroke-width=".7"/><path d="M12 1v5M10 4l2 3 2-3M12 15v-5M10 12l2-3 2 3" fill="none" stroke="#d01818" stroke-width="1.700"/></symbol>
<symbol id="u2" viewBox="0 0 16 16"><path d="M1 2h7v3H1zM1 6.500h7v3H1zM1 11h7v3H1z" fill="#999" stroke="#555" stroke-width=".7"/><path d="M12 7V2M10 4l2-3 2 3M12 9v5M10 12l2 3 2-3" fill="none" stroke="#d01818" stroke-width="1.700"/></symbol>
<symbol id="xls" viewBox="0 0 16 16"><path d="M1 1h14v14H1z" fill="#fff" stroke="#18783c" stroke-width="2"/><path d="M4 4l7 8M11 4l-7 8" stroke="#18883c" stroke-width="2.500"/></symbol>
<symbol id="calc" viewBox="0 0 16 16"><path d="M1.500 2.500h13v11h-13z" fill="#8c94a4" stroke="#445"/><path d="M3 4h10v3H3z" fill="#334"/><path d="M3 9h11M3 11.500h11" stroke="#111" stroke-width="1.500" stroke-dasharray="2 1"/></symbol>
<symbol id="abeq" viewBox="0 0 16 16"><path d="M5.500 1.500h10v6h-10z" fill="#fff" stroke="#444"/><path d="M5 1h11v2H5z" fill="#3c4c90"/><text x="0" y="15" class="t-fx">ab=</text></symbol>
<symbol id="fx" viewBox="0 0 16 16"><text x="1" y="12" class="t-fxl">fx</text></symbol>
<symbol id="fxx" viewBox="0 0 16 16"><text x="4" y="13" class="t-fxl">fx</text><path d="M1 1l6 6M7 1L1 7" stroke="#d06070" stroke-width="2"/></symbol>
<symbol id="data" viewBox="0 0 16 16"><path d="M5 1h10v8H5z" fill="#e4ecf8" stroke="#5878b0"/><path d="M5 1h10v2H5z" fill="#3868c0"/><path d="M0 3h5l1 2h5v8H0z" fill="#f4c840" stroke="#a87c10"/><g transform="translate(5 6) scale(.6)"><use href="#glass"/></g></symbol>
<symbol id="show" viewBox="0 0 16 16"><path d="M1.500 4.500h11v11h-11z" fill="#e8f0fc" stroke="#3868b0"/><path d="M3 8h8M3 10h8M3 12h8M3 14h8" stroke="#3868b0"/><path d="M4 2l8-2 4 3-5 4-5-2z" fill="#a08068" stroke="#432" stroke-width=".7"/></symbol>
<symbol id="view" viewBox="0 0 16 16"><path d="M1 15h14l-1-3H3z" fill="#3860b0"/><path d="M4 10l6-9 3 2-6 9z" fill="#b8ccec" stroke="#2c4c98"/><path d="M12 5v9" stroke="#2c4c98" stroke-width="2"/></symbol>
<symbol id="scale" viewBox="0 0 16 16"><path d="M8 2v12M4 14h8M2 3.500h12" stroke="#a88828" stroke-width="2.200"/><path d="M3 4L0 10h6zM13 4l-3 6h6z" fill="none" stroke="#4c4010" stroke-width=".9"/><path d="M0 10h6q-3 4-6 0M10 10h6q-3 4-6 0" fill="#c8a838" stroke="#4c4010" stroke-width=".7"/></symbol>
<symbol id="mic" viewBox="0 0 16 16"><use href="#micro"/></symbol>
<symbol id="leg" viewBox="0 0 16 16"><path d="M1 0h7v3H1z" fill="#f00000"/><path d="M1 3h7v3H1z" fill="#ff8c00"/><path d="M1 6h7v3H1z" fill="#00e000"/><path d="M1 9h7v3H1z" fill="#00c8f0"/><path d="M1 12h7v4H1z" fill="#0020f0"/><path d="M11 1h3v2h-3zM11 5h3v2h-3zM11 9h3v2h-3zM11 13h3v2h-3z" fill="#ccc" stroke="#555" stroke-width=".8"/></symbol>
<symbol id="lens" viewBox="0 0 16 16"><path d="M0 1h12M0 3.500h12M0 6h6M0 8.500h5M0 11h5" stroke="#555"/><g transform="translate(3 3) scale(.85)"><use href="#glass"/></g></symbol>
<symbol id="pin" viewBox="0 0 10 10"><path d="M3 1h5M3.500 1v5M7 1v5M6 1v5M1 6.500h8M5 7v3" fill="none" stroke="#666"/></symbol>
<symbol id="cls" viewBox="0 0 10 10"><path d="M1 1l8 8M9 1L1 9" stroke="#666" stroke-width="1.400"/></symbol>
<symbol id="up" viewBox="0 0 10 10"><path d="M1.500 7L5 3.500 8.500 7" fill="none" stroke="#505050" stroke-width="2"/></symbol>
<symbol id="dn" viewBox="0 0 10 10"><path d="M1.500 3L5 6.500 8.500 3" fill="none" stroke="#505050" stroke-width="2"/></symbol>
</svg>

<header class="titlebar">
<svg class="app-icon"><use href="#app"/></svg><h1>RFEM 5.20.01 x64 - [Stahlbleche, CC1]</h1>
<div class="winbtns">
<button aria-label="Minimizar"><svg viewBox="0 0 10 10"><path d="M0 5.500h10" stroke="#000"/></svg></button>
<button aria-label="Restaurar"><svg viewBox="0 0 10 10"><path d="M.5 2.500h7v7h-7zM2.500 2V.5h7v7H8" fill="none" stroke="#000"/></svg></button>
<button aria-label="Cerrar"><svg viewBox="0 0 10 10"><path d="M0 0l10 10M10 0L0 10" stroke="#000"/></svg></button>
</div>
</header>

<nav class="menubar">
<svg class="mdi"><use href="#mdi"/></svg>
<a href="#"><u>A</u>rchivo</a><a href="#"><u>E</u>dición</a><a href="#"><u>V</u>er</a><a href="#"><u>I</u>nsertar</a><a href="#"><u>C</u>álculo</a><a href="#"><u>R</u>esultados</a><a href="#"><u>H</u>erramientas</a><a href="#"><u>T</u>abla</a><a href="#"><u>O</u>pciones</a><a href="#"><u>M</u>ódulos adicionales</a><a href="#">Ve<u>n</u>tana</a><a href="#">A<u>y</u>uda</a>
<div class="mdibtns">
<button aria-label="Minimizar ventana"><svg viewBox="0 0 10 10"><path d="M2 8.500h6" stroke="#555" stroke-width="2"/></svg></button>
<button aria-label="Restaurar ventana"><svg viewBox="0 0 10 10"><path d="M.5 4h6v5h-6zM2 2.500h7V7" fill="none" stroke="#777"/><path d="M2 1.500h8" stroke="#555" stroke-width="2"/></svg></button>
<button aria-label="Cerrar ventana"><svg viewBox="0 0 10 10"><path d="M1 1l8 8M9 1L1 9" stroke="#777" stroke-width="2"/></svg></button>
</div>
</nav>

<div class="toolrow">
<div class="bar"><i class="grip"></i>
<button class="tb" aria-label="Nuevo"><svg><use href="#new"/></svg></button><button class="tb" aria-label="Abrir"><svg><use href="#open"/></svg></button><button class="tb" aria-label="Administrador"><svg><use href="#cabo"/></svg></button><button class="tb" aria-label="Bloques"><svg><use href="#cabb"/></svg></button><button class="tb" aria-label="Guardar"><svg><use href="#save"/></svg></button><button class="tb" aria-label="Informe"><svg><use href="#note"/></svg></button><button class="tb" aria-label="Imprimir"><svg><use href="#print"/></svg></button><button class="tb" aria-label="Vista previa"><svg><use href="#preview"/></svg></button>
<i class="sep"></i><button class="tb" aria-label="Deshacer"><svg><use href="#undo"/></svg></button><button class="tb" aria-label="Rehacer"><svg><use href="#redo"/></svg></button>
<i class="sep"></i><button class="tb" aria-label="Romboide"><svg><use href="#spar"/></svg></button><button class="tb" aria-label="Círculo"><svg><use href="#scir"/></svg></button><button class="tb" aria-label="Anillo"><svg><use href="#targ"/></svg></button><button class="tb" aria-label="Selección"><svg><use href="#scur"/></svg></button><button class="tb" aria-label="Selección especial"><svg><use href="#swin"/></svg></button>
<i class="sep"></i><button class="tb on" aria-label="Navegador"><svg><use href="#list"/></svg></button><button class="tb on" aria-label="Tablas"><svg><use href="#table"/></svg></button>
<i class="sep"></i><button class="tb" aria-label="Nuevo caso"><svg><use href="#load"/></svg></button>
<select class="combo wide" aria-label="Caso de carga"><option>CC1 - Test</option></select>
<button class="tb" aria-label="Anterior"><svg><use href="#prevl"/></svg></button><button class="tb" aria-label="Siguiente"><svg><use href="#nextl"/></svg></button><button class="tb on" aria-label="Mostrar cargas"><svg><use href="#eyea"/></svg></button><button class="tb on" aria-label="Valores de carga"><svg><use href="#xxa"/></svg></button><button class="tb on" aria-label="Mostrar resultados"><svg><use href="#eyet"/></svg></button><button class="tb on" aria-label="Valores de resultados"><svg><use href="#xxt"/></svg></button>
<i class="sep"></i><button class="tb" aria-label="Ver"><svg><use href="#specs"/></svg></button><button class="tb" aria-label="Parámetros de cálculo"><svg><use href="#abw"/></svg></button><button class="tb" aria-label="Calcular"><svg><use href="#ab"/></svg></button>
</div>
<div class="bar"><i class="grip"></i>
<button class="tb" aria-label="Plano de trabajo"><svg><use href="#hgrid"/></svg></button><button class="tb" aria-label="Rejilla"><svg><use href="#gsnap"/></svg></button><button class="tb on" aria-label="Plano XY"><svg><use href="#wp1"/></svg></button><button class="tb" aria-label="Plano YZ"><svg><use href="#wp2"/></svg></button><button class="tb" aria-label="Plano XZ"><svg><use href="#wp3"/></svg></button><button class="tb" aria-label="Malla"><svg><use href="#gdot"/></svg></button><button class="tb" aria-label="Ejes"><svg><use href="#axw"/></svg></button>
<i class="sep"></i><button class="tb" aria-label="Copiar"><svg><use href="#copy"/></svg></button><button class="tb" aria-label="Girar"><svg><use href="#rot"/></svg></button><button class="tb" aria-label="Simetría"><svg><use href="#mir"/></svg></button><button class="tb" aria-label="Conectar"><svg><use href="#xnode"/></svg></button><button class="tb" aria-label="Información"><svg><use href="#info"/></svg></button><button class="tb" aria-label="Opciones"><svg><use href="#gdoc"/></svg></button><button class="tb" aria-label="Configuración"><svg><use href="#gears"/></svg></button>
</div>
<div class="bar"><i class="grip"></i>
<button class="tb" aria-label="Captura"><svg><use href="#scr"/></svg></button><button class="tb" aria-label="Captura total"><svg><use href="#scr"/></svg></button><button class="tb" aria-label="PDF"><svg><use href="#pdf"/></svg></button><button class="tb" aria-label="PDF 3D"><svg><use href="#pdf"/></svg></button>
</div>
</div>
<div class="toolrow">
<div class="bar"><i class="grip"></i>
<button class="tb split" aria-label="Nudo"><svg><use href="#node"/></svg></button><button class="tb" aria-label="Línea"><svg><use href="#line"/></svg></button><button class="tb split" aria-label="Barra"><svg><use href="#memb"/></svg></button><button class="tb split" aria-label="Polilínea"><svg><use href="#poly"/></svg></button>
<i class="sep"></i><button class="tb" aria-label="Apoyo en nudo"><svg><use href="#supp"/></svg></button><button class="tb" aria-label="Apoyo en línea"><svg><use href="#supl"/></svg></button><button class="tb" aria-label="Apoyo en superficie"><svg><use href="#supf"/></svg></button>
<i class="sep"></i><button class="tb split" aria-label="Cota"><svg><use href="#dim"/></svg></button><button class="tb" aria-label="Comentario"><svg><use href="#dxx"/></svg></button><button class="tb" aria-label="Sección"><svg><use href="#sect"/></svg></button>
<i class="sep"></i><button class="tb split" aria-label="Superficie"><svg><use href="#surf"/></svg></button><button class="tb split" aria-label="Abertura"><svg><use href="#opng"/></svg></button><button class="tb split" aria-label="Intersección"><svg><use href="#fold"/></svg></button><button class="tb" aria-label="Sólido"><svg><use href="#sold"/></svg></button><button class="tb split" aria-label="Conjunto"><svg><use href="#boxs"/></svg></button>
<i class="sep"></i><button class="tb split" aria-label="Casos de carga"><svg><use href="#dist"/></svg></button><button class="tb" aria-label="Carga en nudo"><svg><use href="#nload"/></svg></button><button class="tb" aria-label="Carga en barra"><svg><use href="#mload"/></svg></button><button class="tb" aria-label="Carga en línea"><svg><use href="#mload"/></svg></button><button class="tb" aria-label="Carga superficial"><svg><use href="#fload"/></svg></button><button class="tb split" aria-label="Carga en sólido"><svg><use href="#sload"/></svg></button>
</div>
<div class="bar"><i class="grip"></i>
<button class="tb" aria-label="Mover vista"><svg><use href="#pan"/></svg></button><button class="tb" aria-label="Ampliar"><svg><use href="#zoomw"/></svg></button><button class="tb" aria-label="Ver todo"><svg><use href="#zoomx"/></svg></button><button class="tb" aria-label="Isométrica"><svg><use href="#wire"/></svg></button><button class="tb" aria-label="Perspectiva"><svg><use href="#exps"/></svg></button>
<i class="sep"></i><button class="tb" aria-label="Vista en X"><svg><use href="#vx"/></svg></button><button class="tb" aria-label="Vista en Y"><svg><use href="#vy"/></svg></button><button class="tb" aria-label="Vista en Z"><svg><use href="#vz"/></svg></button><button class="tb split" aria-label="Vista en -Y"><svg><use href="#vmy"/></svg></button><button class="tb split" aria-label="Visibilidad"><svg><use href="#vis"/></svg></button>
<i class="sep"></i><button class="tb split" aria-label="Representación"><svg><use href="#lblk"/></svg></button>
</div>
<div class="bar"><i class="grip"></i>
<button class="tb" aria-label="Deformada"><svg><use href="#frm"/></svg></button><button class="tb" aria-label="Animación"><svg><use href="#gray"/></svg></button>
<i class="sep"></i><button class="tb" aria-label="Resultados en barras"><svg><use href="#itri"/></svg></button><button class="tb" aria-label="Resultados en superficies"><svg><use href="#fan"/></svg></button><button class="tb" aria-label="Resultados en sólidos"><svg><use href="#cube"/></svg></button><button class="tb" aria-label="Reacciones"><svg><use href="#react"/></svg></button><button class="tb" aria-label="Secciones"><svg><use href="#rtri"/></svg></button><button class="tb split" aria-label="Valores"><svg><use href="#four"/></svg></button><button class="tb" aria-label="Diagramas"><svg><use href="#icur"/></svg></button><button class="tb" aria-label="Rejilla de resultados"><svg><use href="#resg"/></svg></button>
<i class="sep"></i><button class="tb on" aria-label="Panel"><svg><use href="#pnl"/></svg></button><button class="tb split" aria-label="Asistente"><svg><use href="#wand"/></svg></button><button class="tb split" aria-label="Colores"><svg><use href="#flag"/></svg></button>
</div>
</div>

<main class="work">
<aside class="navigator">
<div class="dock-head"><h2>Navegador de proyectos - Resultados</h2><button aria-label="Fijar"><svg><use href="#pin"/></svg></button><button aria-label="Cerrar navegador"><svg><use href="#cls"/></svg></button></div>
<div class="treebox">
<div class="treearea">
<ul class="tree">
<li><ul>
<li><label class="node"><b class="ex plus"></b><input type="checkbox" class="mixed"><svg><use href="#fan"/></svg>Características de superficies isótropas</label></li>
<li><label class="node"><b class="ex plus"></b><input type="checkbox" class="mixed"><svg><use href="#fan"/></svg>Tensiones de contacto</label></li>
<li><label class="node"><b class="ex plus"></b><input type="checkbox" class="mixed"><svg><use href="#fan"/></svg>Forma</label></li>
</ul></li>
<li><label class="node"><b class="ex"></b><input type="checkbox"><svg><use href="#cube"/></svg>Sólidos</label><ul>
<li><label class="node"><b class="ex"></b><input type="checkbox" class="mixed"><svg><use href="#cube"/></svg>Tensiones</label><ul>
<li><label class="node"><input type="radio" name="s"><svg><use href="#cube"/></svg>σ<sub>x</sub></label></li>
<li><label class="node"><input type="radio" name="s"><svg><use href="#cube"/></svg>σ<sub>y</sub></label></li>
<li><label class="node"><input type="radio" name="s" checked><svg><use href="#cube"/></svg>σ<sub>z</sub></label></li>
<li><label class="node"><input type="radio" name="s"><svg><use href="#cube"/></svg>τ<sub>yz</sub></label></li>
<li><label class="node"><input type="radio" name="s"><svg><use href="#cube"/></svg>τ<sub>xz</sub></label></li>
<li><label class="node"><input type="radio" name="s"><svg><use href="#cube"/></svg>τ<sub>xy</sub></label></li>
<li><label class="node"><input type="radio" name="s"><svg><use href="#cube"/></svg>τ<sub>max</sub></label></li>
<li><label class="node"><input type="radio" name="s"><svg><use href="#cube"/></svg>σ<sub>1</sub></label></li>
<li><label class="node"><input type="radio" name="s"><svg><use href="#cube"/></svg>σ<sub>2</sub></label></li>
<li><label class="node"><input type="radio" name="s"><svg><use href="#cube"/></svg>σ<sub>3</sub></label></li>
<li><label class="node"><input type="radio" name="s"><svg><use href="#cube"/></svg>σ<sub>123</sub></label></li>
<li><label class="node"><input type="radio" name="s"><svg><use href="#cube"/></svg>σ<sub>v,Mises</sub></label></li>
<li><label class="node"><input type="radio" name="s"><svg><use href="#cube"/></svg>σ<sub>v,Tresca</sub></label></li>
<li><label class="node"><input type="radio" name="s"><svg><use href="#cube"/></svg>σ<sub>v,Rankine</sub></label></li>
<li><label class="node"><input type="radio" name="s"><svg><use href="#cube"/></svg>σ<sub>v,Bach</sub></label></li>
</ul></li>
<li><label class="node"><b class="ex plus"></b><input type="checkbox" class="mixed"><svg><use href="#cube"/></svg>Deformaciones</label></li>
<li><label class="node"><b class="ex plus"></b><input type="checkbox" class="mixed"><svg><use href="#cube"/></svg>Deformaciones plásticas</label></li>
</ul></li>
<li><label class="node"><b class="ex plus"></b><input type="checkbox"><svg><use href="#arch"/></svg>Criterio</label></li>
<li><label class="node"><b class="ex plus"></b><input type="checkbox"><svg><use href="#react"/></svg>Reacciones en apoyos</label></li>
<li class="marked"><label class="node"><b class="ex"></b><input type="checkbox" checked><svg><use href="#arch"/></svg>Distribución de carga</label><ul>
<li><label class="node"><b class="ex plus"></b><input type="checkbox"><svg><use href="#arch"/></svg>Nudos de malla de EF</label></li>
<li><label class="node"><b class="ex"></b><input type="radio" name="d" checked><svg><use href="#arch"/></svg>EFs de superficies 2D</label><ul>
<li><label class="node"><b class="ex"></b><input type="checkbox" class="mixed"><svg><use href="#arch"/></svg>Global</label><ul>
<li><label class="node"><input type="radio" name="p"><svg><use href="#arch"/></svg>p<sub>X</sub></label></li>
<li><label class="node"><input type="radio" name="p"><svg><use href="#arch"/></svg>p<sub>Y</sub></label></li>
<li><label class="node"><input type="radio" name="p" checked><svg><use href="#arch"/></svg>p<sub>Z</sub></label></li>
</ul></li>
<li><label class="node"><b class="ex"></b><input type="checkbox" class="mixed"><svg><use href="#arch"/></svg>Local</label><ul>
<li><label class="node"><input type="radio" name="p"><svg><use href="#arch"/></svg>p<sub>x</sub></label></li>
<li><label class="node"><input type="radio" name="p"><svg><use href="#arch"/></svg>p<sub>y</sub></label></li>
<li><label class="node"><input type="radio" name="p"><svg><use href="#arch"/></svg>p<sub>z</sub></label></li>
</ul></li>
</ul></li>
<li><label class="node"><b class="ex plus"></b><input type="radio" name="d"><svg><use href="#arch"/></svg>EF de sólidos 3D</label></li>
</ul></li>
<li><label class="node"><b class="ex"></b><input type="checkbox" checked><svg><use href="#xx"/></svg>Valores en superficies</label><ul>
<li><label class="node"><b class="ex"></b><input type="checkbox" class="mixed"><svg><use href="#xx"/></svg>Valores</label><ul>
<li><label class="node"><input type="radio" name="v" checked><svg><use href="#xx"/></svg>p<sub>Z</sub></label></li>
<li><label class="node"><b class="ex plus"></b><input type="radio" name="v"><svg><use href="#xx"/></svg>Grupos</label></li>
<li><label class="node"><b class="ex plus"></b><input type="radio" name="v"><svg><use href="#xx"/></svg>Específicos</label></li>
</ul></li>
<li><label class="node"><b class="ex"></b><input type="checkbox" class="mixed"><svg><use href="#xx"/></svg>Configuración</label><ul>
<li><label class="node"><b class="ex"></b><input type="checkbox" checked><svg><use href="#four"/></svg>Valores extremos</label><ul>
<li><label class="node"><input type="radio" name="e"><svg><use href="#four"/></svg>De todo el modelo</label></li>
<li><label class="node"><input type="radio" name="e"><svg><use href="#four"/></svg>De todas las superficies</label></li>
<li><label class="node"><input type="radio" name="e"><svg><use href="#four"/></svg>De todos los sólidos</label></li>
<li><label class="node"><input type="radio" name="e" checked><svg><use href="#four"/></svg>De todos los valores extremos locales</label></li>
<li><label class="node"><input type="checkbox" checked><svg><use href="#four"/></svg>Mínimo</label></li>
<li><label class="node"><input type="checkbox" checked><svg><use href="#four"/></svg>Máximo</label></li>
<li><label class="node"><input type="checkbox" checked><svg><use href="#four"/></svg>Mostrar sólo extremos</label></li>
</ul></li>
<li><label class="node"><b class="ex plus"></b><input type="radio" name="q"><svg><use href="#four"/></svg>En puntos de rejilla y definidos por el usuario</label></li>
<li><label class="node"><input type="radio" name="q" checked><svg><use href="#four"/></svg>En puntos de malla de EF</label></li>
<li><label class="node"><input type="checkbox"><svg><use href="#xx"/></svg>Símbolos</label></li>
<li><label class="node"><input type="checkbox"><svg><use href="#xx"/></svg>Numeración</label></li>
<li><label class="node"><input type="checkbox"><svg><use href="#xx"/></svg>Transparente</label></li>
</ul></li>
</ul></li>
</ul>
</div>
<div class="vscroll"><button aria-label="Subir"><svg><use href="#up"/></svg></button><i class="gap"></i><i class="thumb"></i><button aria-label="Bajar"><svg><use href="#dn"/></svg></button></div>
</div>
<div class="navtabs">
<button><svg><use href="#data"/></svg>Datos</button><button><svg><use href="#show"/></svg>Mostrar</button><button><svg><use href="#view"/></svg>Vistas</button><button class="active"><svg><use href="#fan"/></svg>Resultados</button>
</div>
</aside>

<div class="right">
<div class="upper">
<section class="view">
<svg class="model" viewBox="385 101 1371 824" preserveAspectRatio="xMinYMin meet">
<defs>
<path id="mesh10" class="mesh" d="M0 1H10M0 2H10M0 3H10M0 4H10M0 5H10M0 6H10M0 7H10M0 8H10M0 9H10M1 0V10M2 0V10M3 0V10M4 0V10M5 0V10M6 0V10M7 0V10M8 0V10M9 0V10"/>
<g id="sup"><path d="M517 368l20-14 20 11-20 12z" fill="#40f040" opacity=".7"/><path d="M517 368l26-14 8 8-15 14z" fill="#10e020" opacity=".75"/><path d="M524 346q3-3 8 0l18 8q4 4 1 10l-20-6-8-5z" fill="#20e850" opacity=".75"/><path d="M524 346q3-3 8 0l4 2-10 9-4-2z" fill="#5c90c8"/><ellipse cx="549" cy="359" rx="3" ry="5" fill="#60f860"/><path d="M533 367v13q4 3 9 0v-13z" fill="#00dc00"/><ellipse cx="537.500" cy="367" rx="4.500" ry="2" fill="#20b820"/></g>
</defs>
<path d="M509 210L622.500 131.700V290.700L509 369z" fill="#9494ff"/>
<path d="M509 210L622.500 131.700 920 251.300 806.400 330z" fill="#7f7fdd"/>
<path d="M509 210L622.500 131.700V255.800z" fill="#6464dc"/>
<path d="M806.400 330L920 251.300V410.300L806.400 488.700z" fill="#9494ff"/>
<path d="M642.900 263.700L756.400 185.700 785.700 197.300 672.500 275.700z" fill="#00009a"/>
<use href="#mesh10" transform="matrix(11.350 -7.830 0 15.900 509 210)"/>
<use href="#mesh10" transform="matrix(11.360 -7.870 0 15.900 806.400 330)"/>
<use href="#mesh10" transform="matrix(14.870 6 11.350 -7.830 509 210)"/>
<use href="#mesh10" transform="matrix(14.870 6 11.350 -7.830 657.700 270)"/>
<path d="M509 369L622.500 290.700M806.400 488.700L920 410.300" stroke="#20ff20" stroke-width="1.500"/>
<path d="M509 369V210L622.500 131.700 920 251.300 806.400 330 509 210M806.400 330V488.700M622.500 255.800V290.700M920 251.300V410.300" fill="none" stroke="#202030" stroke-width="1.300"/>
<path d="M622.500 131.700V256" stroke="#4848b8"/>
<g fill="none" stroke="#800000" stroke-width="1.200" stroke-dasharray="9 3 2 3"><path d="M642.500 264V423L672.500 435 785.700 356.300 756.400 344.700 642.900 423.300M672.500 276V435M756.400 310V345M785.700 323V356"/></g>
<g fill="none" stroke="#5a3cb0" stroke-width="1.300" stroke-dasharray="9 3 2 3"><path d="M756.400 220V308M785.700 198V321"/></g>
<path d="M642.900 263.700L756.400 185.700 785.700 197.300 672.500 275.700z" fill="none" stroke="#a01818" stroke-width="1.200" stroke-dasharray="6 2"/>
<g fill="#800000"><path d="M507 208h4v4h-4zM620.500 130h4v4h-4zM918 249h4v4h-4zM804 328h4v4h-4zM507 367h4v4h-4zM620.500 289h4v4h-4zM804 487h4v4h-4zM918 408h4v4h-4zM641 262h4v4h-4zM670.500 274h4v4h-4zM754.500 184h4v4h-4zM784 195.500h4v4h-4zM641 421.500h4v4h-4zM670.500 433h4v4h-4zM754.500 343h4v4h-4zM784 354.500h4v4h-4z"/></g>
<use href="#sup"/><use href="#sup" x="57" y="-40"/><use href="#sup" x="297" y="119"/><use href="#sup" x="354" y="80"/>
<path d="M642.700 578.700L756.300 500.300 785.700 512.300V827L672.300 905.300 642.700 893.700z" fill="#d2a2d2"/>
<path d="M642.700 578.700L756.300 500.300 785.700 512.300 672.300 590.700zM642.700 893.700L756.300 815 785.700 827 672.300 905.300z" fill="#e6cce6"/>
<path d="M642.700 578.700L756.300 500.300 785.700 512.300 672.300 590.700zM642.700 893.700L756.300 815 785.700 827 672.300 905.300zM642.700 578.700V893.700M672.300 590.700V905.300M756.300 500.300V815M785.700 512.300V827" fill="none" stroke="#801a84" stroke-width="1.200"/>
<path d="M641 892h4v4h-4z" fill="#800080"/>
<text x="618" y="908" class="m-load">p-ZL -5000.0</text>
<path d="M440 804l28 11" stroke="#f00000" stroke-width="2"/><path d="M464 811l9 6-11 0z" fill="#b00000"/>
<path d="M440 804l-20 14" stroke="#00f000" stroke-width="2"/><path d="M423 813l-8 9 9-3z" fill="#009000" stroke="#009000"/>
<path d="M440 804v30" stroke="#0000f0" stroke-width="2"/><path d="M437 829h6l-3 10z" fill="#0000a0"/>
<text x="477" y="824" fill="#f00000">X</text><text x="407" y="829" fill="#00e000">Y</text><text x="437" y="850" fill="#0000e0">Z</text>
<text x="389" y="117">Modo de visibilidad</text><text x="389" y="131">Distribución de carga [kN/m^2]</text><text x="389" y="145">CC1 : Test</text><text x="389" y="159">Cargas [kN/m^2]</text>
<text x="389" y="918">Máx.pZ: -5000.0, Mín. pZ: -5000.0 kN/m^2</text>
</svg>
</section>
<aside class="panel">
<div class="dock-head"><h2>Panel</h2><button aria-label="Fijar panel"><svg><use href="#pin"/></svg></button><button aria-label="Cerrar panel"><svg><use href="#cls"/></svg></button></div>
<div class="panelbody">
<p>Distribución de carga</p><p class="unit">[kN/m<sup>2</sup>]</p>
<div class="legend"><div class="swatch"></div><div class="ticks"><span>-5000.0</span><span>-5000.0</span></div></div>
<dl class="extremes"><dt>Máx&nbsp; :</dt><dd>-5000.0</dd><dt>Mín &nbsp; :</dt><dd>-5000.0</dd></dl>
<button class="lens" aria-label="Detalles"><svg><use href="#lens"/></svg></button>
</div>
<div class="paneltabs"><button class="active" aria-label="Colores"><svg><use href="#leg"/></svg></button><button aria-label="Factores"><svg><use href="#scale"/></svg></button><button aria-label="Filtro"><svg><use href="#mic"/></svg></button></div>
</aside>
</div>

<section class="tables">
<div class="dock-head"><h2>3.8 Cargas rectangulares libres</h2><button aria-label="Fijar tabla"><svg><use href="#pin"/></svg></button><button aria-label="Cerrar tabla"><svg><use href="#cls"/></svg></button></div>
<div class="tablebar">
<button class="tb" aria-label="Editar"><svg><use href="#t1"/></svg></button><button class="tb" aria-label="Insertar cargas"><svg><use href="#t2"/></svg></button><button class="tb on" aria-label="Cargas"><svg><use href="#t3"/></svg></button><button class="tb" aria-label="Resultados"><svg><use href="#t4"/></svg></button><button class="tb" aria-label="Dinámica"><svg><use href="#t5"/></svg></button>
<i class="sep"></i><button class="tb" aria-label="Tabla anterior"><svg><use href="#tl"/></svg></button><button class="tb" aria-label="Tabla siguiente"><svg><use href="#tr"/></svg></button>
<i class="sep"></i><button class="tb on" aria-label="Tabla a gráfico"><svg><use href="#c1"/></svg></button><button class="tb on" aria-label="Gráfico a tabla"><svg><use href="#c2"/></svg></button><button class="tb" aria-label="Actualizar"><svg><use href="#c3"/></svg></button>
<i class="sep"></i><button class="tb" aria-label="Sumar"><svg><use href="#gp"/></svg></button><button class="tb" aria-label="Multiplicar"><svg><use href="#gx"/></svg></button><button class="tb" aria-label="Dividir"><svg><use href="#gd"/></svg></button>
<i class="sep"></i><button class="tb" aria-label="Vaciar"><svg><use href="#gx"/></svg></button>
<i class="sep"></i><button class="tb" aria-label="Eliminar fila"><svg><use href="#rx"/></svg></button><button class="tb" aria-label="Quitar fila"><svg><use href="#rl"/></svg></button><button class="tb" aria-label="Insertar fila"><svg><use href="#rg"/></svg></button>
<i class="sep"></i><button class="tb" aria-label="Cabecera"><svg><use href="#y1"/></svg></button><button class="tb" aria-label="Filas"><svg><use href="#y2"/></svg></button><button class="tb" aria-label="Formato"><svg><use href="#y3"/></svg></button>
<i class="sep"></i><button class="tb on" aria-label="Filtro de carga"><svg><use href="#keyb"/></svg></button>
<i class="sep"></i><button class="tb" aria-label="Nueva carga"><svg><use href="#load"/></svg></button><button class="tb" aria-label="Propiedades"><svg><use href="#hand"/></svg></button>
<i class="sep"></i><select class="combo" aria-label="Caso de la tabla"><option>CC1 - Test</option></select>
<i class="sep"></i><button class="tb" aria-label="Caso anterior"><svg><use href="#prev"/></svg></button><i class="sep"></i><button class="tb" aria-label="Caso siguiente"><svg><use href="#next"/></svg></button>
<i class="sep"></i><button class="tb" aria-label="Contraer"><svg><use href="#u1"/></svg></button><button class="tb" aria-label="Expandir"><svg><use href="#u2"/></svg></button>
<i class="sep"></i><button class="tb" aria-label="Ver selección"><svg><use href="#specs"/></svg></button><i class="sep"></i><button class="tb" aria-label="Excel"><svg><use href="#xls"/></svg></button><i class="sep"></i><button class="tb" aria-label="Calculadora"><svg><use href="#calc"/></svg></button>
<i class="sep"></i><button class="tb" aria-label="Parámetros"><svg><use href="#abeq"/></svg></button><button class="tb" aria-label="Fórmula"><svg><use href="#fx"/></svg></button><button class="tb" aria-label="Borrar fórmula"><svg><use href="#fxx"/></svg></button>
</div>
<div class="gridwrap">
<table class="grid">
<colgroup><col class="w46"><col class="w132"><col class="w60"><col class="w72"><col class="w54"><col class="w66"><col class="w66"><col class="w66"><col class="w66"><col class="w72"><col class="w72"><col></colgroup>
<thead>
<tr class="letters"><th rowspan="3" class="num">Núm.</th><th>A</th><th>B</th><th>C</th><th>D</th><th>E</th><th>F</th><th>G</th><th>H</th><th>I</th><th class="sel">J</th><th>K</th></tr>
<tr class="group"><th></th><th></th><th>Distribución</th><th>Dirección</th><th colspan="4">Posición de la carga</th><th colspan="2">Magnitud [kN/m<sup>2</sup>]</th><th></th></tr>
<tr class="names"><th>En las superficies núm.</th><th>Proyección</th><th>de carga</th><th>de carga</th><th>X <small>1</small> [mm]</th><th>Y <small>1</small> [mm]</th><th>X <small>2</small> [mm]</th><th>Y <small>2</small> [mm]</th><th>p <small>1</small></th><th>p <small>2</small></th><th>Comentario</th></tr>
</thead>
<tbody>
<tr><th class="sel">1</th><td>Todo</td><td class="c"><u>X</u>Y</td><td class="c"><u>U</u>niforme</td><td class="c">ZL</td><td class="r">90.0</td><td class="r">-400.0</td><td class="r">110.0</td><td class="r">-500.0</td><td class="r">-5000.0</td><td class="focus"></td><td></td></tr>
<tr><th>2</th><td></td><td></td><td></td><td></td><td></td><td></td><td></td><td></td><td></td><td></td><td class="off"></td></tr>
<tr><th>3</th><td></td><td></td><td></td><td></td><td></td><td></td><td></td><td></td><td></td><td></td><td class="off"></td></tr>
<tr><th>4</th><td></td><td></td><td></td><td></td><td></td><td></td><td></td><td></td><td></td><td></td><td class="off"></td></tr>
</tbody>
</table>
<div class="vscroll"><button aria-label="Subir tabla"><svg><use href="#up"/></svg></button><i class="thumb"></i><button aria-label="Bajar tabla"><svg><use href="#dn"/></svg></button></div>
</div>
<div class="sheets">
<button>Cargas en nudos</button><button>Cargas en barras</button><button>Cargas lineales</button><button>Cargas superficiales</button><button>Cargas en sólidos</button><button>Cargas puntuales libres</button><button>Cargas lineales libres</button><button class="active">Cargas rectangulares libres</button><button>Cargas circulares libres</button><button>Cargas poligonales libres</button><button>Cargas variables libres</button><button>Deformaciones impuestas en nudos</button>
<div class="sheetnav">
<button aria-label="Primera"><svg viewBox="0 0 10 10"><path d="M2 1v8" stroke="#999" stroke-width="2"/><path d="M9 1v8L5 5z" fill="#999"/></svg></button><button aria-label="Atrás"><svg viewBox="0 0 10 10"><path d="M7 1v8L3 5z" fill="#999"/></svg></button><button aria-label="Adelante"><svg viewBox="0 0 10 10"><path d="M3 1v8l4-4z" fill="#000"/></svg></button><button aria-label="Última"><svg viewBox="0 0 10 10"><path d="M8 1v8" stroke="#000" stroke-width="2"/><path d="M1 1v8l4-4z" fill="#000"/></svg></button>
</div>
</div>
</section>
</div>
</main>
</body>
</html>
```
FILE: styles.css
```css
:root {
  --ui: "Open Sans", "Noto Sans", sans-serif;
  --gdi: "Liberation Sans", Arial, sans-serif;
  --chrome: #cfd3dc;
  --head: #b9c0cb;
}
*, *::before, *::after { box-sizing: border-box; }
body {
  margin: 0;
  height: 100vh;
  display: flex;
  flex-direction: column;
  background: var(--chrome);
  font: 11px/16px var(--ui);
  color: #000;
  overflow: hidden;
}
button { font: inherit; color: inherit; background: none; border: 0; padding: 0; margin: 0; }
ul, dl, dd, p, h1, h2 { margin: 0; padding: 0; font-size: inherit; font-weight: normal; }
.paints { position: absolute; width: 0; height: 0; }
.sprite { display: none; }
.t-five { font: bold 11px var(--gdi); fill: #f0b800; stroke: #604000; stroke-width: .4px; }
.t-xx { font: bold 6px "Liberation Serif", serif; }
.t-ax { font: bold 9px "Liberation Serif", serif; }
.t-note { font: 8px var(--gdi); }
.t-fx { font: italic bold 9px "Liberation Serif", serif; }
.t-fxl { font: italic 14px "Liberation Serif", serif; fill: #666; }

.titlebar { flex: none; height: 23px; background: #fff; display: flex; align-items: center; padding: 0 3px 1px; gap: 5px; }
.titlebar h1 { font-size: 12px; }
.app-icon { width: 15px; height: 16px; }
.winbtns { margin-left: auto; display: flex; align-self: flex-start; }
.winbtns button { width: 46px; height: 20px; display: grid; place-items: center; }
.winbtns svg { width: 10px; height: 10px; }

.menubar { flex: none; height: 24px; display: flex; align-items: center; padding: 0 4px 0 9px; gap: 15px; color: #333; }
.menubar a { color: inherit; text-decoration: none; }
.mdi { width: 17px; height: 14px; margin-right: -5px; }
.mdibtns { margin-left: auto; display: flex; align-self: flex-end; gap: 6px; }
.mdibtns button { width: 10px; height: 18px; }
.mdibtns svg { width: 9px; height: 9px; }

.toolrow { flex: none; display: flex; gap: 2px; height: 26px; }
.bar {
  display: flex; align-items: center; height: 25px; padding: 1px 1px 0 0;
  background: linear-gradient(#eaeff9, #d2d7e1);
  border-bottom: 1px solid #a3a9b8; border-radius: 0 4px 4px 0;
}
.grip { width: 3px; height: 15px; margin: 0 2px 0 4px; background: repeating-linear-gradient(#a4a9b4 0 2px, transparent 2px 4px); }
.sep { width: 1px; height: 15px; margin: 0 4px 0 3px; background: #a6abb8; box-shadow: 1px 0 #fff; }
.tb { width: 22px; height: 22px; display: inline-flex; align-items: center; justify-content: center; flex: none; }
.tb svg { width: 16px; height: 16px; }
.tb.on { border: 1px solid #a89880; background: linear-gradient(#fcdcaa, #fdb562 45%, #fee695); }
.tb.split { width: 35px; padding-left: 5px; justify-content: flex-start; gap: 5px; }
.tb.split::after { content: ""; border: 3px solid transparent; border-top: 4px solid #777; border-bottom: 0; }
.combo {
  appearance: none; border: 0; border-radius: 0; height: 20px; width: 134px; margin: 0 2px; padding: 0 4px; color: #000;
  font: 11px/18px var(--ui);
  background:
    linear-gradient(to top right, transparent 50%, #777 50%) right 8px top 8px / 4px 4px no-repeat,
    linear-gradient(to top left, transparent 50%, #777 50%) right 4px top 8px / 4px 4px no-repeat,
    linear-gradient(#d4d9e4, #d4d9e4) right 1px top 1px / 14px 18px no-repeat, #fff;
}
.combo.wide { width: 217px; }

.work { flex: 1; min-height: 0; display: flex; gap: 4px; }
.navigator { flex: none; width: 379px; display: flex; flex-direction: column; }
.dock-head { flex: none; height: 21px; display: flex; align-items: center; gap: 8px; padding: 0 6px 2px 4px; background: var(--head); border-top: 1px solid #eef1f8; border-bottom: 1px solid #a3a9b8; color: #444; }
.dock-head h2 { flex: 1; }
.dock-head svg { width: 9px; height: 9px; display: block; }
.treebox { flex: 1; min-height: 0; display: flex; border: solid #a3a9b8; border-width: 0 1px 1px 0; padding: 1px 3px 1px; background: #edf0f8; }
.treearea { flex: 1; min-width: 0; background: #fcfbf4; overflow: hidden; }
.tree, .tree ul { list-style: none; }
.tree { padding-left: 5px; }
.tree ul { padding-left: 20px; }
.tree li { background: repeating-linear-gradient(#777 0 1px, transparent 1px 3px) 6px 0 / 1px 100% no-repeat; }
.tree li:last-child { background-size: 1px 9px; }
.node { display: flex; align-items: center; height: 18px; padding-left: 20px; white-space: nowrap; font-size: 11px; background: repeating-linear-gradient(90deg, #777 0 1px, transparent 1px 3px) 8px 9px / 9px 1px no-repeat; }
.ex { flex: none; width: 9px; height: 9px; margin: 2px 9px 0 -18px; border: 1px solid #8c94a4; border-radius: 1px; background: linear-gradient(#2848a0, #2848a0) center / 5px 1px no-repeat, #fff; }
.ex.plus { background: linear-gradient(#2848a0, #2848a0) center / 5px 1px no-repeat, linear-gradient(#2848a0, #2848a0) center / 1px 5px no-repeat, #fff; }
.node input { appearance: none; flex: none; width: 13px; height: 13px; margin: 0 3px 0 0; border: 1px solid #333; background: linear-gradient(135deg, #dfe2e6, #fff); }
.node input[type=radio] { border-radius: 50%; border-color: #555; }
.node input[type=radio]:checked { background: radial-gradient(circle, #000 0 2px, #fff 3px); }
.node input[type=checkbox]:checked { background: #f0f2f5; display: grid; place-items: center; }
.node input[type=checkbox]:checked::after { content: ""; width: 9px; height: 5px; border: solid #000; border-width: 0 0 2px 2px; transform: rotate(-45deg); margin-top: -3px; }
.node input.mixed { background: linear-gradient(#999, #999) center / 7px 7px no-repeat, #e4e6ea; }
.node svg { width: 15px; height: 15px; margin-right: 5px; flex: none; }
.node sub { font-size: 10px; line-height: 10px; vertical-align: baseline; margin-top: 3px; }
.marked { position: relative; }
.marked::after { content: ""; position: absolute; left: -4px; top: -2px; width: 253px; height: 221px; border: 2px solid #0000f8; box-shadow: 4px 4px 4px rgba(0,0,0,.3), inset 4px 4px 4px rgba(0,0,0,.2); pointer-events: none; }
.vscroll { flex: none; width: 15px; display: flex; flex-direction: column; background: #f0f0f0; }
.vscroll button { height: 16px; display: grid; place-items: center; flex: none; }
.vscroll svg { width: 10px; height: 10px; }
.vscroll .gap { flex: 137; }
.vscroll .thumb { flex: 823; background: #cdcdcd; }
.navtabs { flex: none; display: flex; height: 23px; align-items: flex-start; gap: 7px; padding-left: 4px; color: #555; }
.navtabs button { display: flex; align-items: center; gap: 3px; height: 20px; padding: 0 2px; }
.navtabs svg { width: 15px; height: 15px; }
.navtabs .active { background: linear-gradient(#dde2ec, #f4f6fa); border: 1px solid #b4e0e8; border-top: 0; border-radius: 0 0 3px 3px; }

.right { flex: 1; min-width: 0; display: flex; flex-direction: column; gap: 5px; }
.upper { flex: 1; min-height: 0; display: flex; gap: 5px; }
.view { flex: 1; min-width: 0; min-height: 0; background: #fff; border: 1px solid #e4e4e4; border-top: 2px solid #6a6a6a; border-left: 2px solid #6a6a6a; overflow: hidden; display: flex; }
.model { width: 1371px; flex: none; height: 824px; font: 11px var(--gdi); }
.mesh { fill: none; stroke: #a4a4b0; stroke-width: 1px; vector-effect: non-scaling-stroke; stroke-dasharray: 2 2; }
.m-load { fill: #800080; font-size: 10px; }

.panel { flex: none; width: 156px; display: flex; flex-direction: column; font-family: var(--gdi); }
.panel .dock-head { font-family: var(--ui); }
.panelbody { flex: 1; display: flex; flex-direction: column; background: #f0f0f0; border: 1px solid #a3a9b8; border-top: 0; padding: 4px 3px 0 5px; }
.unit { padding-left: 4px; }
.panelbody sup { font-size: 9px; line-height: 9px; vertical-align: 3px; }
.legend { display: flex; height: 215px; margin-top: 2px; padding: 10px 0; background: #faf7f0; border: 1px solid #a0a0a0; border-right-color: #fff; border-bottom-color: #fff; }
.swatch { width: 28px; margin-left: 35px; background: #00009c; border: 1px solid #000; }
.ticks { display: flex; flex-direction: column; justify-content: space-between; }
.ticks span { display: flex; gap: 5px; line-height: 1px; }
.ticks span::before { content: ""; width: 6px; height: 1px; background: #000; }
.extremes { display: grid; grid-template-columns: 34px auto; gap: 1px 3px; justify-content: start; margin-top: 9px; padding: 1px 0 1px 35px; background: #f0f4fa; border: 1px solid #d4e4f4; border-right-color: #a8a8e8; border-bottom-color: #a8a8e8; white-space: nowrap; }
.lens { width: 25px; height: 21px; margin: 136px 0 0 auto; display: grid; place-items: center; background: #e1e1e1; border: 1px solid #adadad; }
.lens svg { width: 16px; height: 16px; }
.paneltabs { flex: none; display: flex; gap: 7px; padding-left: 2px; height: 22px; }
.paneltabs button { width: 23px; height: 20px; display: grid; place-items: center; }
.paneltabs svg { width: 15px; height: 15px; }
.paneltabs .active { background: #eef0f4; border: 1px solid #b4e0e8; border-top: 0; border-radius: 0 0 3px 3px; }

.tables { flex: none; background: #f0f0f0; font-family: var(--gdi); padding-bottom: 18px; }
.tables .dock-head { font-family: var(--ui); }
.tablebar { height: 24px; display: flex; align-items: center; padding-left: 9px; background: linear-gradient(#eaeff9, #d0d5df); }
.tablebar .combo { margin-right: 2px; }
.gridwrap { display: flex; gap: 1px; border: 1px solid #666; border-right-width: 2px; padding: 2px 2px 11px 1px; }
.grid { flex: 1; min-width: 0; table-layout: fixed; border-collapse: collapse; white-space: nowrap; }
.w46 { width: 46px; } .w132 { width: 132px; } .w60 { width: 60px; } .w72 { width: 72px; } .w54 { width: 54px; } .w66 { width: 66px; }
.grid th, .grid td { padding: 0 3px; height: 16px; line-height: 15px; font-weight: normal; border: 1px solid #9a9a9a; }
.grid td { background: #fff; text-align: left; }
.grid td.c { text-align: center; }
.grid td.r { text-align: right; }
.grid td.off, .grid td.focus { background: #f0f0f0; }
.grid td.focus { outline: 1px dotted #000; outline-offset: -1px; }
.grid .letters th { height: 14px; line-height: 12px; background: #e1e1e1; border-color: #666; }
.grid .letters .num { vertical-align: bottom; padding-bottom: 5px; }
.grid .group th { height: 17px; border-bottom: 0; }
.grid .group sup { font-size: 9px; line-height: 9px; vertical-align: 3px; }
.grid .names th { border-top: 0; padding: 0; height: 17px; }
.grid small { font-size: 9px; }
.grid tbody th { background: #e1e1e1; border-color: #666; }
.grid th.sel, .grid .letters th.sel { background: #0078d7; color: #fff; }
.sheets { display: flex; height: 17px; }
.sheets > button { height: 16px; padding: 0 2px 0 1px; line-height: 15px; border: solid #666; border-width: 0 1px 1px 0; border-radius: 0 0 4px 4px; background: #e6e6e6; white-space: nowrap; }
.sheets > .active { background: #fff; }
.sheetnav { margin-left: auto; display: flex; }
.sheetnav button { width: 16px; height: 16px; display: grid; place-items: center; border: 1px solid #888; border-left-color: #fff; }
.sheetnav svg { width: 9px; height: 9px; }
```
